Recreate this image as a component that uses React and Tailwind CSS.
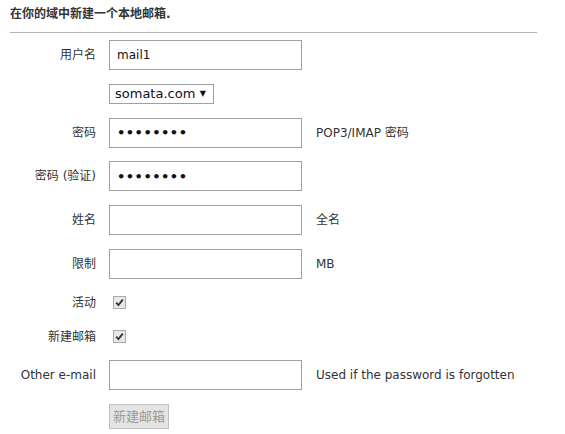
import React, { useState } from 'react';

const font = { fontFamily: '"DejaVu Sans", "Noto Sans CJK SC", sans-serif' };

function Check({ checked, onToggle }) {
  return (
    <span
      role="checkbox"
      aria-checked={checked}
      onClick={onToggle}
      className="ml-[4px] flex h-[13px] w-[13px] items-center justify-center border border-[#a9a9a9] bg-[#e8e8e8]"
    >
      {checked && (
        <svg width="9" height="9" viewBox="0 0 9 9">
          <path d="M1.2 4.6 L3.4 7 L7.8 1.6" fill="none" stroke="#333" strokeWidth="1.8" />
        </svg>
      )}
    </span>
  );
}

function Row({ label, children, hint, h = 'h-[30px]' }) {
  return (
    <div className={`flex items-center ${h}`}>
      <div className="w-[86px] text-right text-[12px] text-[#333]">{label}</div>
      <div className="ml-[13px] flex items-center">{children}</div>
      {hint && <div className="ml-[14px] text-[12px] text-[#333]">{hint}</div>}
    </div>
  );
}

export default function App() {
  const [user, setUser] = useState('mail1');
  const [active, setActive] = useState(true);
  const [create, setCreate] = useState(true);
  const inputCls =
    'h-[30px] w-[193px] border border-[#a0a0a0] bg-white px-[7px] text-[12px] text-[#111] outline-none';
  const passCls = 'font-bold text-[13px] tracking-[0.5px]';

  return (
    <div className="min-h-[434px] bg-white px-[10px]" style={font}>
      <div className="pt-[6px] text-[12px] leading-[16px] font-bold text-[#333]">
        在你的域中新建一个本地邮箱.
      </div>
      <div className="mt-[10px] w-[527px] border-t border-[#b4b4b4]"></div>

      <form className="mt-[7px] flex flex-col gap-[13.8px]" onSubmit={(e) => e.preventDefault()}>
        <Row label="用户名">
          <input className={inputCls} value={user} onChange={(e) => setUser(e.target.value)} />
        </Row>
        <Row label="" h="h-[20px]">
          <div className="flex h-[20px] w-[105px] items-center border border-[#a0a0a0] bg-white pl-[5px] pr-[7px]">
            <select className="flex-1 appearance-none bg-transparent text-[13px] text-[#111] outline-none">
              <option>somata.com</option>
            </select>
            <span className="text-[8px] text-[#111]">▼</span>
          </div>
        </Row>
        <Row label="密码" hint="POP3/IMAP 密码">
          <input type="password" className={`${inputCls} ${passCls}`} defaultValue="mail1234" />
        </Row>
        <Row label="密码 (验证)">
          <input
            type="password"
            className={`${inputCls} ${passCls} border-[#7a9ccf]`}
            defaultValue="mail1234"
          />
        </Row>
        <Row label="姓名" hint="全名">
          <input className={inputCls} />
        </Row>
        <Row label="限制" hint="MB">
          <input className={inputCls} />
        </Row>
        <Row label="活动" h="h-[20px]">
          <Check checked={active} onToggle={() => setActive(!active)} />
        </Row>
        <Row label="新建邮箱" h="h-[20px]">
          <Check checked={create} onToggle={() => setCreate(!create)} />
        </Row>
        <Row label="Other e-mail" hint="Used if the password is forgotten">
          <input className={inputCls} />
        </Row>
        <Row label="" h="h-[25px]">
          <button
            disabled
            className="h-[25px] w-[60px] border border-[#c0c0c0] bg-[#e4e4e4] text-[13px] text-[#9a9a9a]"
          >
            新建邮箱
          </button>
        </Row>
      </form>
    </div>
  );
}
